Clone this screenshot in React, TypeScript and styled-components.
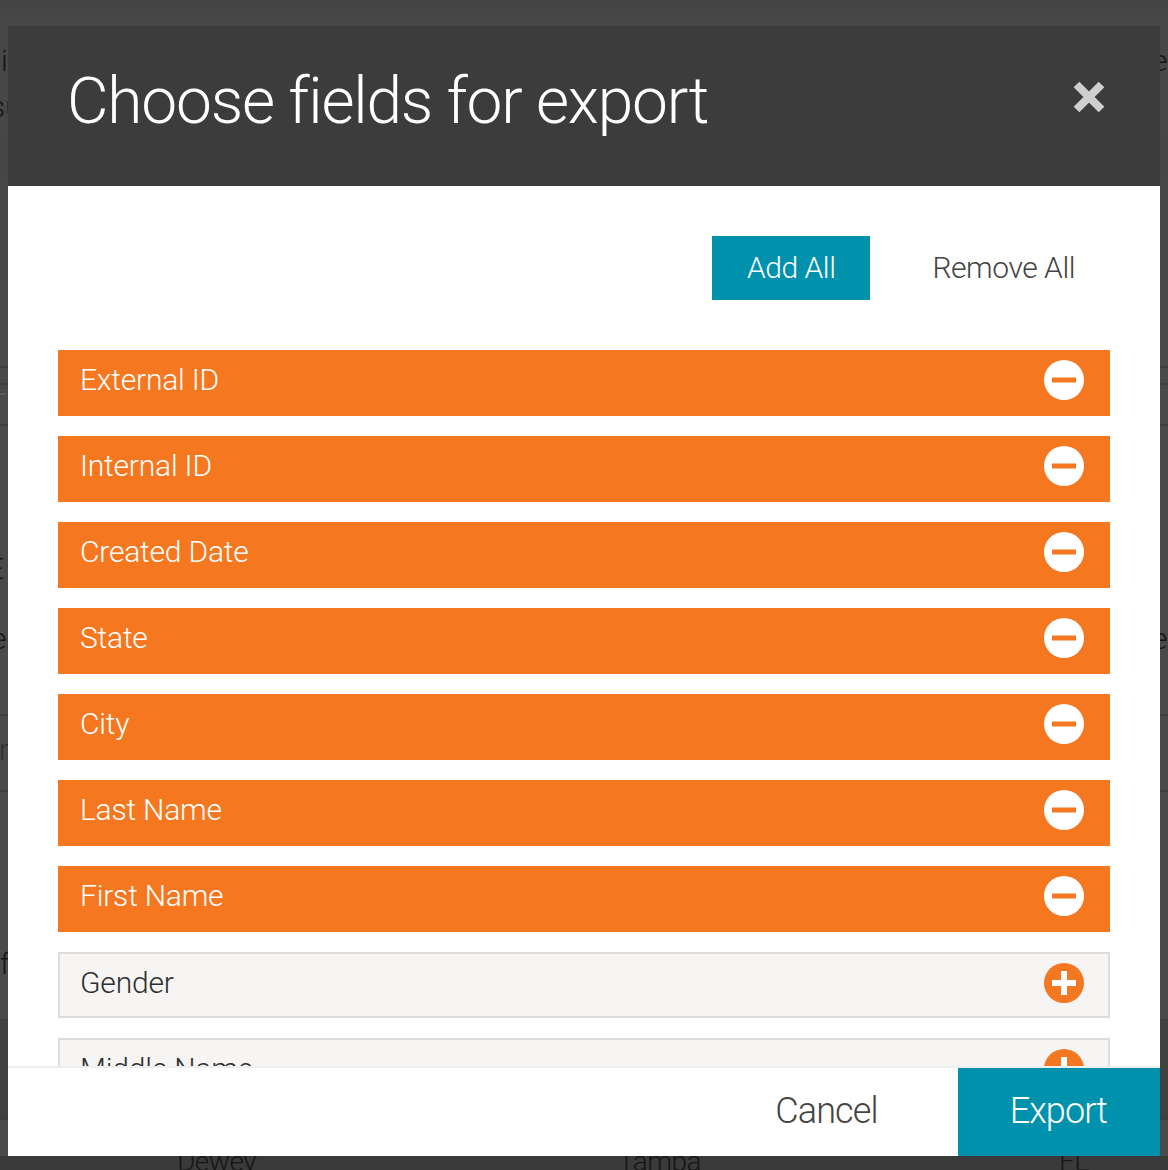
import { FC } from 'react'
import styled, { createGlobalStyle } from 'styled-components'

const GlobalStyle = createGlobalStyle`
  html, body {
    margin: 0;
    padding: 0;
    background: #3a3a3a;
    font-family: Roboto, "Liberation Sans", sans-serif;
    font-weight: 300;
  }
  * { box-sizing: border-box; }
`

const Page = styled.div`
  position: relative;
  width: 1168px;
  height: 1170px;
  overflow: hidden;
`

/* table that sits behind the dimmed overlay */
const Backdrop = styled.div`
  display: flex;
  flex-direction: column;
  width: 100%;
  height: 100%;
  color: #161616;
  font-size: 30px;
`

const BackRow = styled.div<{ $h: number; $bg?: string; $line?: boolean }>`
  display: flex;
  justify-content: space-between;
  align-items: flex-start;
  flex: 0 0 ${p => p.$h}px;
  height: ${p => p.$h}px;
  background: ${p => p.$bg || '#4a4a4a'};
  border-bottom: ${p => (p.$line ? '2px solid #3e3e3e' : 'none')};
`

const TopRow = styled(BackRow)`
  background: linear-gradient(#434343, #484848 25px, #464646 160px, #4a4a4a 400px);
`

const Fragment = styled.span<{ $top: number; $shift?: number; $dim?: boolean }>`
  display: block;
  width: 8px;
  height: 40px;
  margin-top: ${p => p.$top}px;
  color: ${p => (p.$dim ? '#303030' : 'inherit')};
  white-space: nowrap;
  line-height: 40px;
  text-indent: ${p => p.$shift || 0}px;
`

const FragmentStack = styled.div`
  display: flex;
  flex-direction: column;
  width: 8px;
`

const InputEdge = styled.span`
  display: block;
  width: 6px;
  height: 2px;
  margin-top: 8px;
  background: #5a5a5a;
`

const LastRow = styled.div`
  display: grid;
  grid-template-columns: 441px 441px 1fr;
  flex: 1;
  padding-left: 177px;
  background: #3a3a3a;
  color: #161616;
  font-size: 28px;
  letter-spacing: -0.5px;
  line-height: 12px;
`

const Modal = styled.div`
  position: absolute;
  left: 8px;
  top: 26px;
  display: flex;
  flex-direction: column;
  width: 1152px;
  height: 1130px;
  background: #fff;
`

const Header = styled.header`
  display: flex;
  justify-content: space-between;
  align-items: center;
  flex: 0 0 160px;
  padding: 0 55px 0 59px;
  background: #3c3c3c;
`

const Title = styled.h1`
  margin: 0 0 8px;
  color: #fff;
  font-size: 64px;
  font-weight: 300;
  letter-spacing: -1.2px;
  line-height: 1;
`

const CloseButton = styled.button`
  display: flex;
  width: 32px;
  height: 32px;
  margin: 0 0 18px;
  padding: 0;
  border: 0;
  background: none;
`

const Body = styled.div`
  flex: 1;
  min-height: 0;
  overflow: hidden;
  padding: 50px 50px 0;
`

const Actions = styled.div`
  display: flex;
  justify-content: flex-end;
  gap: 27px;
  margin-bottom: 50px;
`

const ActionButton = styled.button<{ $primary?: boolean }>`
  height: 64px;
  padding: 0 35px 2px;
  border: 0;
  background: ${p => (p.$primary ? '#0092ad' : 'transparent')};
  color: ${p => (p.$primary ? '#fff' : '#444')};
  font: inherit;
  font-size: 30px;
  letter-spacing: -0.45px;
`

const FieldList = styled.ul`
  display: flex;
  flex-direction: column;
  gap: 20px;
  margin: 0;
  padding: 0;
  list-style: none;
`

const Field = styled.li<{ $selected?: boolean }>`
  display: flex;
  justify-content: space-between;
  align-items: center;
  height: 66px;
  padding: ${p => (p.$selected ? '0 26px 6px 22px' : '0 24px 4px 20px')};
  border: ${p => (p.$selected ? '0' : '2px solid #dddcd9')};
  background: ${p => (p.$selected ? '#f57820' : '#f6f5f3')};
  color: ${p => (p.$selected ? '#fff' : '#2e2e2e')};
  font-size: 30px;
  letter-spacing: -0.2px;
`

const FieldName = styled.span`
  margin-bottom: 2px;
`

const Footer = styled.footer`
  display: flex;
  justify-content: flex-end;
  gap: 27px;
  flex: 0 0 90px;
  border-top: 2px solid #eeeeee;
`

const FooterButton = styled.button<{ $primary?: boolean }>`
  padding: 0 53px 2px ${p => (p.$primary ? 52 : 53)}px;
  border: 0;
  background: ${p => (p.$primary ? '#0092ad' : 'transparent')};
  color: ${p => (p.$primary ? '#fff' : '#444')};
  font: inherit;
  font-size: 36px;
  letter-spacing: -0.9px;
`

const CloseIcon: FC = () => (
  <svg width="32" height="32" viewBox="0 0 32 32">
    <path d="M3.5 3.5 L28.5 28.5 M28.5 3.5 L3.5 28.5" stroke="#cfcfcf" strokeWidth="8" fill="none" />
  </svg>
)

const FieldIcon: FC<{ selected: boolean }> = ({ selected }) => (
  <svg width="40" height="40" viewBox="0 0 40 40">
    <circle cx="20" cy="20" r="20" fill={selected ? '#fff' : '#f47721'} />
    {selected ? (
      <rect x="8" y="17.5" width="24" height="5" fill="#f57820" />
    ) : (
      <path d="M8 17h9V8h6v9h9v6h-9v9h-6v-9H8z" fill="#fff" />
    )}
  </svg>
)

const fields = [
  { name: 'External ID', selected: true },
  { name: 'Internal ID', selected: true },
  { name: 'Created Date', selected: true },
  { name: 'State', selected: true },
  { name: 'City', selected: true },
  { name: 'Last Name', selected: true },
  { name: 'First Name', selected: true },
  { name: 'Gender', selected: false },
  { name: 'Middle Name', selected: false },
]

const App: FC = () => (
  <Page>
    <GlobalStyle />
    <Backdrop>
      <TopRow $h={368} $line>
        <FragmentStack>
          <Fragment $top={41} $shift={1}>i</Fragment>
          <Fragment $top={6} $shift={-10}>su</Fragment>
        </FragmentStack>
        <Fragment $top={41} $shift={-8}>er</Fragment>
      </TopRow>
      <BackRow $h={17} $line />
      <BackRow $h={41} $line>
        <InputEdge />
      </BackRow>
      <BackRow $h={290} $line>
        <FragmentStack>
          <Fragment $top={123} $shift={-13}>E</Fragment>
          <Fragment $top={30} $shift={-9}>e</Fragment>
        </FragmentStack>
        <Fragment $top={193} $shift={-8}>e</Fragment>
      </BackRow>
      <BackRow $h={76} $line>
        <Fragment $top={14} $shift={-1} $dim>r</Fragment>
      </BackRow>
      <BackRow $h={227}>
        <Fragment $top={152}>f</Fragment>
      </BackRow>
      <BackRow $h={101} $bg="#404040" $line />
      <BackRow $h={36} />
      <LastRow>
        <span>Dewey</span>
        <span>Tampa</span>
        <span>FL</span>
      </LastRow>
    </Backdrop>
    <Modal>
      <Header>
        <Title>Choose fields for export</Title>
        <CloseButton>
          <CloseIcon />
        </CloseButton>
      </Header>
      <Body>
        <Actions>
          <ActionButton $primary>Add All</ActionButton>
          <ActionButton>Remove All</ActionButton>
        </Actions>
        <FieldList>
          {fields.map(f => (
            <Field key={f.name} $selected={f.selected}>
              <FieldName>{f.name}</FieldName>
              <FieldIcon selected={f.selected} />
            </Field>
          ))}
        </FieldList>
      </Body>
      <Footer>
        <FooterButton>Cancel</FooterButton>
        <FooterButton $primary>Export</FooterButton>
      </Footer>
    </Modal>
  </Page>
)

export default App
